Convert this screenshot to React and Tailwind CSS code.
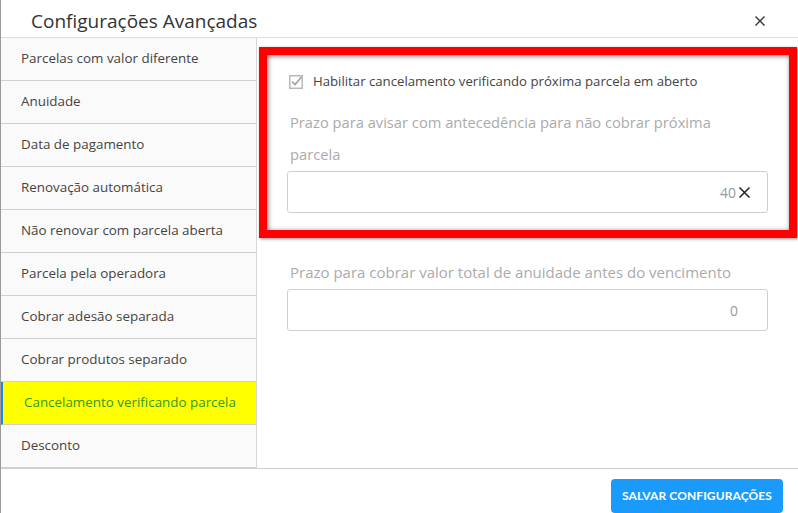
import React from "react";

const items = [
  "Parcelas com valor diferente",
  "Anuidade",
  "Data de pagamento",
  "Renovação automática",
  "Não renovar com parcela aberta",
  "Parcela pela operadora",
  "Cobrar adesão separada",
  "Cobrar produtos separado",
  "Cancelamento verificando parcela",
  "Desconto",
];

export default function App() {
  return (
    <div
      className="w-[798px] h-[513px] overflow-hidden flex bg-white"
      style={{ fontFamily: "'Open Sans', Lato, sans-serif" }}
    >
      <div className="w-[1px] bg-[#9a9a9a] shrink-0" />
      <div className="flex-1 flex flex-col bg-white">
        {/* header */}
        <div className="h-[38px] shrink-0 flex items-center justify-between border-b border-[#dedede] pl-[30px] pr-[32px] pt-[5px]">
          <div className="text-[19px] text-[#333] leading-none">Configurações Avançadas</div>
          <svg width="12" height="12" viewBox="0 0 12 12">
            <path d="M1.5 1.5 L10.5 10.5 M10.5 1.5 L1.5 10.5" stroke="#333" strokeWidth="1.4" />
          </svg>
        </div>
        {/* body */}
        <div className="flex h-[430px] shrink-0">
          <div className="w-[256px] shrink-0 bg-[#fafafa] border-r border-[#d8d8d8] flex flex-col">
            {items.map((t, i) => {
              const active = i === 8;
              return (
                <div
                  key={t}
                  className={
                    active
                      ? "h-[43px] shrink-0 border-b border-[#d0d0d0] bg-[#ffff00] border-l-[2px] border-l-[#1e88e5] flex items-center pl-[21px] text-[13.4px] text-[#2e9a2e]"
                      : "h-[43px] shrink-0 border-b border-[#d0d0d0] flex items-center pl-[20px] text-[13.4px] text-[#444]"
                  }
                >
                  <span className="pb-[1px]">{t}</span>
                </div>
              );
            })}
          </div>
          <div className="flex-1 pl-[2px] pr-[1px] pt-[9px]">
            <div className="border-[8px] border-[#ff0000] shadow-[inset_1px_1px_5px_rgba(0,0,0,0.55),1px_1px_3px_rgba(0,0,0,0.45)] h-[191px] pl-[20px] pr-[21px] pt-[19px]">
              <div className="flex items-center gap-[10px] pl-[2px] h-[16px]">
                <svg width="14" height="14" viewBox="0 0 14 14">
                  <rect x="0.75" y="0.75" width="12.5" height="12.5" fill="none" stroke="#b8b8b8" strokeWidth="1.5" />
                  <path d="M3 6.5 L6 9.5 L12.5 2" fill="none" stroke="#a0a0a0" strokeWidth="1.6" />
                </svg>
                <span className="text-[13.2px] text-[#444] leading-none">
                  Habilitar cancelamento verificando próxima parcela em aberto
                </span>
              </div>
              <div className="mt-[16px] pl-[3px] max-w-[450px] text-[14.7px] leading-[32px] text-[#ababab]">
                Prazo para avisar com antecedência para não cobrar próxima parcela
              </div>
              <div className="mt-[1px] h-[42px] border border-[#cfcfcf] rounded-[3px] flex items-center justify-end pr-[16px]">
                <span className="text-[14px] text-[#999]">40</span>
                <svg width="13" height="13" viewBox="0 0 13 13" className="ml-[2px]">
                  <path d="M1.5 1.5 L11.5 11.5 M11.5 1.5 L1.5 11.5" stroke="#222" strokeWidth="1.5" />
                </svg>
              </div>
            </div>
            <div className="pl-[28px] pr-[29px] mt-[22px]">
              <div className="pl-[3px] text-[15px] leading-[22px] text-[#ababab] pt-[1px]">
                Prazo para cobrar valor total de anuidade antes do vencimento
              </div>
              <div className="mt-[6px] h-[42px] border border-[#cfcfcf] rounded-[3px] flex items-center justify-end pr-[29px]">
                <span className="text-[14px] text-[#999]">0</span>
              </div>
            </div>
          </div>
        </div>
        {/* footer */}
        <div className="flex-1 border-t border-[#d0d0d0] flex justify-end pr-[15px] pt-[10px]">
          <button
            className="h-[34px] px-[11px] rounded-[4px] bg-[#1a9bfc] text-white text-[12px] font-bold tracking-[0.1px]"
            style={{ fontFamily: "Lato, sans-serif" }}
          >
            SALVAR CONFIGURAÇÕES
          </button>
        </div>
      </div>
    </div>
  );
}
